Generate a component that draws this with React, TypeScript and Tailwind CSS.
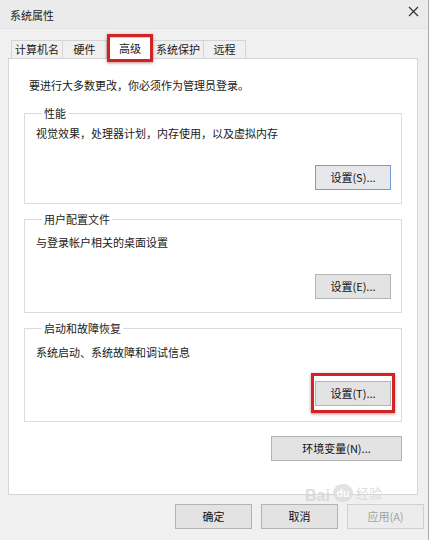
const font = { fontFamily: '"Noto Sans CJK SC", "Microsoft YaHei", sans-serif' };

function Btn({ label, focused, disabled, className = "" }: { label: string; focused?: boolean; disabled?: boolean; className?: string }) {
  const tone = disabled
    ? "border-[#cfcfcf] bg-[#ececec] text-[#a3a3a3]"
    : focused
    ? "border-[#6f9fd6] bg-[#e6e8eb] text-[#111]"
    : "border-[#b3b3b3] bg-[#e3e3e3] text-[#111]";
  return (
    <button className={`flex h-[25px] items-center justify-center border text-[11px] leading-none ${tone} ${className}`}>
      {label}
    </button>
  );
}

function Group({ title, text, button, pt, gap, pb, highlight }: { title: string; text: string; button: string; pt: string; gap: string; pb: string; highlight?: boolean }) {
  return (
    <fieldset className={`border border-[#dcdcdc] pl-[11px] pr-[10px] ${pb}`}>
      <legend className="ml-[6px] px-[2px] text-[11px] leading-[16px] text-[#222]">{title}</legend>
      <p className={`text-[11px] leading-[16px] text-[#1a1a1a] ${pt}`}>{text}</p>
      <div className={`flex justify-end ${gap}`}>
        <div className="relative">
          <Btn label={button} focused={!highlight && button.includes("(S)")} className="w-[76px]" />
          {highlight && (
            <div className="pointer-events-none absolute -left-[4px] -right-[4px] -top-[8px] -bottom-[7px] border-[3px] border-[#cf2424] shadow-[0_1px_3px_rgba(120,0,0,0.45)]" />
          )}
        </div>
      </div>
    </fieldset>
  );
}

export default function App() {
  return (
    <div className="relative h-[540px] w-[429px] overflow-hidden border-r border-[#a9a9a9] bg-[#f0f0f0] text-black" style={font}>
      <div className="flex h-[29px] items-center justify-between border-b border-[#e4e4e4] bg-[#ebebeb] pl-[10px] pr-[9px]">
        <span className="mt-[3px] text-[11px] text-[#222]">系统属性</span>
        <svg width="11" height="11" viewBox="0 0 11 11" className="-mt-[6px]">
          <path d="M1 1 L10 10 M10 1 L1 10" stroke="#333" strokeWidth="1.2" />
        </svg>
      </div>

      <div className="pl-[8px] pr-[10px]">
        <div className="flex h-[29px] items-end pl-[3px] text-[11px] leading-none text-[#1a1a1a]">
          <div className="flex h-[18px] w-[52px] items-center justify-center border border-b-0 border-[#d5d5d5] bg-[#f0f0f0]">计算机名</div>
          <div className="flex h-[18px] w-[44px] items-center justify-center border border-b-0 border-l-0 border-[#d5d5d5] bg-[#f0f0f0]">硬件</div>
          <div className="relative z-10 -mb-px flex h-[22px] w-[46px] items-start justify-center border border-b-0 border-[#d5d5d5] bg-white pt-[5px]">
            高级
            <div className="pointer-events-none absolute -left-[1px] -right-[1px] -top-[4px] -bottom-[3px] border-[3px] border-[#cf2424] shadow-[0_1px_3px_rgba(120,0,0,0.45)]" />
          </div>
          <div className="flex h-[18px] w-[51px] items-center justify-center border border-b-0 border-l-0 border-[#d5d5d5] bg-[#f0f0f0]">系统保护</div>
          <div className="flex h-[18px] w-[42px] items-center justify-center border border-b-0 border-l-0 border-[#d5d5d5] bg-[#f0f0f0]">远程</div>
        </div>

        <div className="flex h-[437px] flex-col border border-[#d5d5d5] bg-white pl-[15px] pr-[15px] pt-[18px]">
          <p className="pl-[5px] text-[11px] leading-[16px] text-[#1a1a1a]">要进行大多数更改，你必须作为管理员登录。</p>
          <div className="mt-[12px] flex flex-col gap-[7px]">
            <Group title="性能" text="视觉效果，处理器计划，内存使用，以及虚拟内存" button="设置(S)..." pt="pt-[4px]" gap="mt-[24px]" pb="pb-[13px]" />
            <Group title="用户配置文件" text="与登录帐户相关的桌面设置" button="设置(E)..." pt="pt-[7px]" gap="mt-[24px]" pb="pb-[13px]" />
            <Group title="启动和故障恢复" text="系统启动、系统故障和调试信息" button="设置(T)..." pt="pt-[8px]" gap="mt-[21px]" pb="pb-[15px]" highlight />
          </div>
          <div className="mt-[14px] flex justify-end">
            <Btn label="环境变量(N)..." className="w-[131px]" />
          </div>
        </div>

        <div className="mt-[9px] flex justify-end gap-[9px] -mr-[6px]">
          <Btn label="确定" className="w-[77px]" />
          <Btn label="取消" className="w-[77px]" />
          <Btn label="应用(A)" disabled className="w-[77px]" />
        </div>
      </div>

      <div className="pointer-events-none absolute left-[305px] top-[484px] flex items-start gap-[3px] text-[#d6d6d6] opacity-80">
        <span className="mt-[4px] text-[16px] font-bold leading-none" style={{ fontFamily: '"Liberation Sans", sans-serif' }}>Bai</span>
        <span className="flex h-[18px] w-[20px] items-center justify-center rounded-full bg-[#dcdcdc] text-[10px] font-bold leading-none text-white">du</span>
        <span className="mt-[2px] text-[13px] leading-none">经验</span>
      </div>
    </div>
  );
}
